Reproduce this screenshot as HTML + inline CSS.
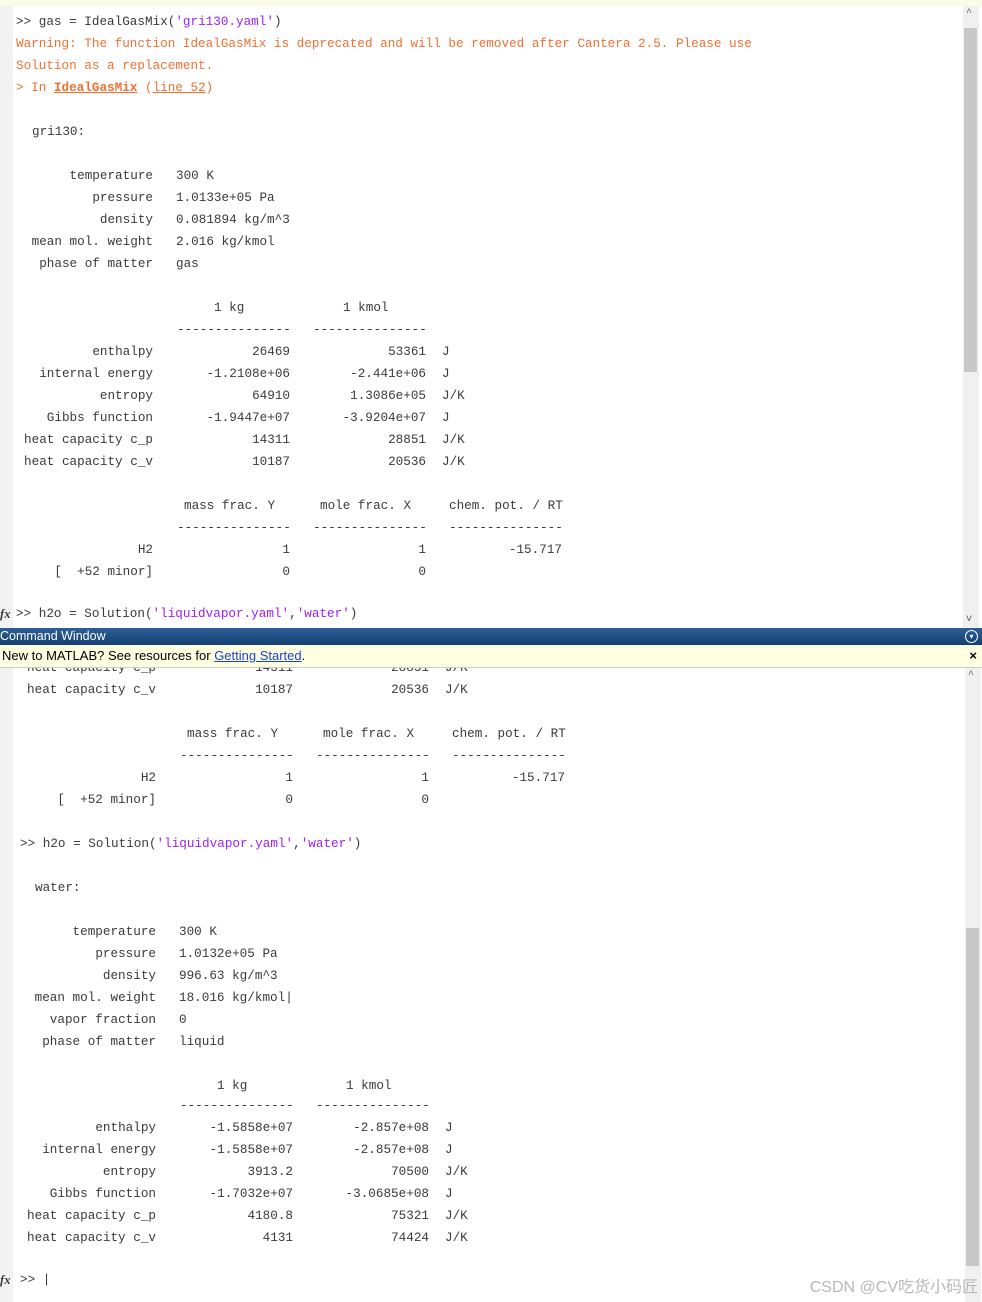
<!DOCTYPE html>
<html><head><meta charset="utf-8"><style>
body{margin:0;width:982px;height:1302px;position:relative;overflow:hidden;background:#fff;font-family:"Liberation Mono","Noto Sans CJK SC",monospace;font-size:12.65px;color:#3a3a3a}
.r{position:absolute;left:0;width:982px;height:18px;line-height:18px;white-space:pre}
.r span{position:absolute;top:0}
.w{color:#f07030}
.s{color:#a020f0}
.gut{position:absolute;left:0;width:13px;background:#f2f2f2}
.sb{position:absolute;width:16px;background:#f0f0f0}
.th{position:absolute;width:13px;background:#c8c8c8;left:1px}
</style></head><body>
<div style="position:absolute;left:0;top:0;width:982px;height:6px;background:#fbfbea"></div>
<div class="gut" style="top:6px;height:622px"></div>
<div class="sb" style="left:963px;top:6px;height:622px"><div class="th" style="top:22px;height:344px"></div></div>
<div style="position:absolute;left:966px;top:8px;font-size:10px;color:#666">^</div>
<div style="position:absolute;left:966px;top:614px;font-size:10px;color:#666">v</div>

<div class="r" style="top:13px"><span style="left:16px">&gt;&gt; gas = IdealGasMix(<span class="s" style="position:static">'gri130.yaml'</span>)</span></div>
<div class="r w" style="top:35px"><span style="left:16px">Warning: The function IdealGasMix is deprecated and will be removed after Cantera 2.5. Please use</span></div>
<div class="r w" style="top:57px"><span style="left:16px">Solution as a replacement.</span></div>
<div class="r w" style="top:79px"><span style="left:16px">&gt; In <b style="text-decoration:underline">IdealGasMix</b> (<u>line 52</u>)</span></div>
<div class="r" style="top:123px"><span style="left:32px">gri130:</span></div>
<div class="r" style="top:167px"><span style="right:829px">temperature</span><span style="left:176px">300 K</span></div>
<div class="r" style="top:189px"><span style="right:829px">pressure</span><span style="left:176px">1.0133e+05 Pa</span></div>
<div class="r" style="top:211px"><span style="right:829px">density</span><span style="left:176px">0.081894 kg/m^3</span></div>
<div class="r" style="top:233px"><span style="right:829px">mean mol. weight</span><span style="left:176px">2.016 kg/kmol</span></div>
<div class="r" style="top:255px"><span style="right:829px">phase of matter</span><span style="left:176px">gas</span></div>
<div class="r" style="top:299px"><span style="left:214px">1 kg</span><span style="left:343px">1 kmol</span></div>
<div class="r" style="top:321px"><span style="left:177px">---------------</span><span style="left:313px">---------------</span></div>
<div class="r" style="top:343px"><span style="right:829px">enthalpy</span><span style="right:692px">26469</span><span style="right:556px">53361</span><span style="left:442px">J</span></div>
<div class="r" style="top:365px"><span style="right:829px">internal energy</span><span style="right:692px">-1.2108e+06</span><span style="right:556px">-2.441e+06</span><span style="left:442px">J</span></div>
<div class="r" style="top:387px"><span style="right:829px">entropy</span><span style="right:692px">64910</span><span style="right:556px">1.3086e+05</span><span style="left:442px">J/K</span></div>
<div class="r" style="top:409px"><span style="right:829px">Gibbs function</span><span style="right:692px">-1.9447e+07</span><span style="right:556px">-3.9204e+07</span><span style="left:442px">J</span></div>
<div class="r" style="top:431px"><span style="right:829px">heat capacity c_p</span><span style="right:692px">14311</span><span style="right:556px">28851</span><span style="left:442px">J/K</span></div>
<div class="r" style="top:453px"><span style="right:829px">heat capacity c_v</span><span style="right:692px">10187</span><span style="right:556px">20536</span><span style="left:442px">J/K</span></div>
<div class="r" style="top:497px"><span style="left:184px">mass frac. Y</span><span style="left:320px">mole frac. X</span><span style="left:449px">chem. pot. / RT</span></div>
<div class="r" style="top:519px"><span style="left:177px">---------------</span><span style="left:313px">---------------</span><span style="left:449px">---------------</span></div>
<div class="r" style="top:541px"><span style="right:829px">H2</span><span style="right:692px">1</span><span style="right:556px">1</span><span style="right:420px">-15.717</span></div>
<div class="r" style="top:563px"><span style="right:829px">[  +52 minor]</span><span style="right:692px">0</span><span style="right:556px">0</span></div>
<div class="r" style="top:605px"><span style="left:0;font-style:italic;font-family:'Liberation Serif';font-weight:bold">fx</span><span style="left:16px">&gt;&gt; h2o = Solution(<span class="s" style="position:static">'liquidvapor.yaml'</span>,<span class="s" style="position:static">'water'</span>)</span></div>

<div style="position:absolute;left:0;top:628px;width:982px;height:17px;background:linear-gradient(#2d5f96,#133f70);color:#fff;font-family:'Liberation Sans',sans-serif;font-size:12.5px;line-height:17px">Command Window<span style="position:absolute;right:4px;top:2px;width:11px;height:11px;border:1px solid #fff;border-radius:50%;font-size:8px;line-height:11px;text-align:center">▾</span></div>
<div style="position:absolute;left:0;top:645px;width:982px;height:22px;background:#ffffe1;border-bottom:1px solid #ccc;font-family:'Liberation Sans',sans-serif;font-size:13px;line-height:22px;color:#000;z-index:2"><span style="margin-left:2px">New to MATLAB? See resources for <u style="color:#1a3edb">Getting Started</u>.</span><span style="position:absolute;right:5px;font-weight:bold">×</span></div>

<div class="gut" style="top:668px;height:634px"></div>
<div class="sb" style="left:965px;top:668px;height:634px"><div class="th" style="top:260px;height:338px"></div></div>
<div style="position:absolute;left:968px;top:670px;font-size:10px;color:#666">^</div>

<div class="r" style="top:659px"><span style="right:826px">heat capacity c_p</span><span style="right:689px">14311</span><span style="right:553px">28851</span><span style="left:445px">J/K</span></div>
<div class="r" style="top:681px"><span style="right:826px">heat capacity c_v</span><span style="right:689px">10187</span><span style="right:553px">20536</span><span style="left:445px">J/K</span></div>
<div class="r" style="top:725px"><span style="left:187px">mass frac. Y</span><span style="left:323px">mole frac. X</span><span style="left:452px">chem. pot. / RT</span></div>
<div class="r" style="top:747px"><span style="left:180px">---------------</span><span style="left:316px">---------------</span><span style="left:452px">---------------</span></div>
<div class="r" style="top:769px"><span style="right:826px">H2</span><span style="right:689px">1</span><span style="right:553px">1</span><span style="right:417px">-15.717</span></div>
<div class="r" style="top:791px"><span style="right:826px">[  +52 minor]</span><span style="right:689px">0</span><span style="right:553px">0</span></div>
<div class="r" style="top:835px"><span style="left:20px">&gt;&gt; h2o = Solution(<span class="s" style="position:static">'liquidvapor.yaml'</span>,<span class="s" style="position:static">'water'</span>)</span></div>
<div class="r" style="top:879px"><span style="left:35px">water:</span></div>
<div class="r" style="top:923px"><span style="right:826px">temperature</span><span style="left:179px">300 K</span></div>
<div class="r" style="top:945px"><span style="right:826px">pressure</span><span style="left:179px">1.0132e+05 Pa</span></div>
<div class="r" style="top:967px"><span style="right:826px">density</span><span style="left:179px">996.63 kg/m^3</span></div>
<div class="r" style="top:989px"><span style="right:826px">mean mol. weight</span><span style="left:179px">18.016 kg/kmol|</span></div>
<div class="r" style="top:1011px"><span style="right:826px">vapor fraction</span><span style="left:179px">0</span></div>
<div class="r" style="top:1033px"><span style="right:826px">phase of matter</span><span style="left:179px">liquid</span></div>
<div class="r" style="top:1077px"><span style="left:217px">1 kg</span><span style="left:346px">1 kmol</span></div>
<div class="r" style="top:1097px"><span style="left:180px">---------------</span><span style="left:316px">---------------</span></div>
<div class="r" style="top:1119px"><span style="right:826px">enthalpy</span><span style="right:689px">-1.5858e+07</span><span style="right:553px">-2.857e+08</span><span style="left:445px">J</span></div>
<div class="r" style="top:1141px"><span style="right:826px">internal energy</span><span style="right:689px">-1.5858e+07</span><span style="right:553px">-2.857e+08</span><span style="left:445px">J</span></div>
<div class="r" style="top:1163px"><span style="right:826px">entropy</span><span style="right:689px">3913.2</span><span style="right:553px">70500</span><span style="left:445px">J/K</span></div>
<div class="r" style="top:1185px"><span style="right:826px">Gibbs function</span><span style="right:689px">-1.7032e+07</span><span style="right:553px">-3.0685e+08</span><span style="left:445px">J</span></div>
<div class="r" style="top:1207px"><span style="right:826px">heat capacity c_p</span><span style="right:689px">4180.8</span><span style="right:553px">75321</span><span style="left:445px">J/K</span></div>
<div class="r" style="top:1229px"><span style="right:826px">heat capacity c_v</span><span style="right:689px">4131</span><span style="right:553px">74424</span><span style="left:445px">J/K</span></div>
<div class="r" style="top:1271px"><span style="left:0;font-style:italic;font-family:'Liberation Serif';font-weight:bold">fx</span><span style="left:20px">&gt;&gt; |</span></div>
<div style="position:absolute;right:4px;top:1273px;font-family:'Liberation Sans','Noto Sans CJK SC',sans-serif;font-size:16px;color:#b8b8b8">CSDN @CV吃货小码匠</div>
</body></html>
